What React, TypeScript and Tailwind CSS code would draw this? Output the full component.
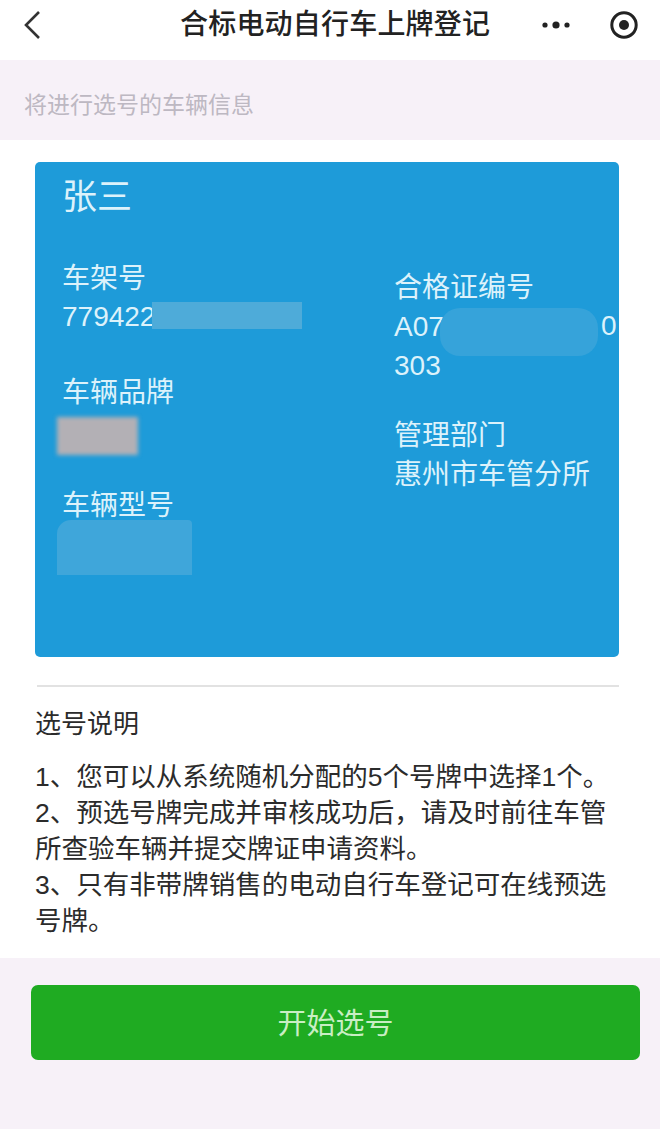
const font = '[font-family:"Liberation_Sans","Noto_Sans_CJK_SC",sans-serif]';

function Field({ label, children, className = '' }: { label: string; children?: React.ReactNode; className?: string }) {
  return (
    <div className={className}>
      <div className="h-[39px] text-[28px] leading-[39px]">{label}</div>
      {children}
    </div>
  );
}

export default function App() {
  return (
    <div className={`flex h-[1129px] w-[660px] flex-col overflow-hidden bg-white text-[#2b2b2b] ${font}`}>
      {/* Nav bar */}
      <header className="flex h-[60px] shrink-0 items-start pl-[24px] pt-[10px]">
        <svg width="18" height="30" viewBox="0 0 18 30" fill="none" stroke="#333" strokeWidth="2.6" className="-ml-px">
          <path d="M16 2 L3 15 L16 28" />
        </svg>
        <h1 className="ml-[139px] text-[28px] font-medium leading-[30px] tracking-[0.2px] text-[#222]">合标电动自行车上牌登记</h1>
        <div className="ml-[50px] flex items-center gap-[38px] pt-[1px]">
          <svg width="32" height="28" viewBox="0 0 32 28" fill="#222">
            <circle cx="5" cy="14" r="2.6" />
            <circle cx="16" cy="14" r="3.6" />
            <circle cx="27" cy="14" r="2.6" />
          </svg>
          <svg width="28" height="28" viewBox="0 0 28 28" fill="none">
            <circle cx="14" cy="14" r="12.2" stroke="#222" strokeWidth="3" />
            <circle cx="14" cy="14" r="5" fill="#222" />
          </svg>
        </div>
      </header>

      {/* Section heading */}
      <div className="flex h-[80px] shrink-0 items-center bg-[#f7f1f8] pl-[24px] pt-[10px] text-[23px] text-[#bdb8c2]">
        将进行选号的车辆信息
      </div>

      {/* Vehicle card */}
      <main className="flex-1 pl-[35px] pr-[41px] pt-[22px]">
        <section className="relative flex h-[495px] rounded-[5px] bg-[#1e9bd9] pl-[27px] text-[#dcf2fb]">
          <div className="w-[333px] pt-[12px]">
            <div className="text-[35px] leading-[46px]">张三</div>
            <Field label="车架号" className="mt-[39px]">
              <div className="h-[38px] text-[28px] leading-[38px]">779422</div>
            </Field>
            <Field label="车辆品牌" className="mt-[37px]" />
            <Field label="车辆型号" className="mt-[74px]" />
          </div>
          <div className="pt-[106px]">
            <Field label="合格证编号">
              <div className="w-[225px] text-[28px] leading-[39px]">
                <div className="whitespace-nowrap">A07</div>
                <div>303</div>
              </div>
            </Field>
            <Field label="管理部门" className="mt-[31px]">
              <div className="text-[28px] leading-[39px]">惠州市车管分所</div>
            </Field>
          </div>

          {/* Privacy masks over the data */}
          <div className="absolute left-[117px] top-[140px] h-[27px] w-[150px] bg-[#4eabd9]" />
          <div className="absolute left-[22px] top-[255px] h-[38px] w-[81px] bg-[#b3b0b5] blur-[2px]" />
          <div className="absolute left-[22px] top-[358px] h-[55px] w-[135px] rounded-tl-[14px] rounded-tr-[4px] bg-[#3fa6da]" />
          <div className="absolute left-[405px] top-[146px] h-[48px] w-[158px] rounded-[20px] bg-[#36a3da]" />
          <div className="absolute left-[566px] top-[144px] text-[28px] leading-[39px]">0</div>
        </section>

        <div className="ml-[2px] mt-[28px] h-[2px] w-[582px] bg-[#e2e2e2]" />

        <h2 className="mt-[19px] text-[26px] leading-[36px] text-[#2b2b2b]">选号说明</h2>
        <div className="mt-[17px] w-[584px] text-[26.5px] leading-[36px]">
          <p>1、您可以从系统随机分配的5个号牌中选择1个。</p>
          <p>2、预选号牌完成并审核成功后，请及时前往车管所查验车辆并提交牌证申请资料。</p>
          <p>3、只有非带牌销售的电动自行车登记可在线预选号牌。</p>
        </div>
      </main>

      {/* Bottom action */}
      <footer className="h-[171px] shrink-0 bg-[#f7f1f8] pl-[31px] pr-[20px] pt-[27px]">
        <button className="flex h-[75px] w-[609px] items-center justify-center rounded-[7px] bg-[#1fab22] pt-[4px] text-[29px] text-[#c9eec4]">
          开始选号
        </button>
      </footer>
    </div>
  );
}
